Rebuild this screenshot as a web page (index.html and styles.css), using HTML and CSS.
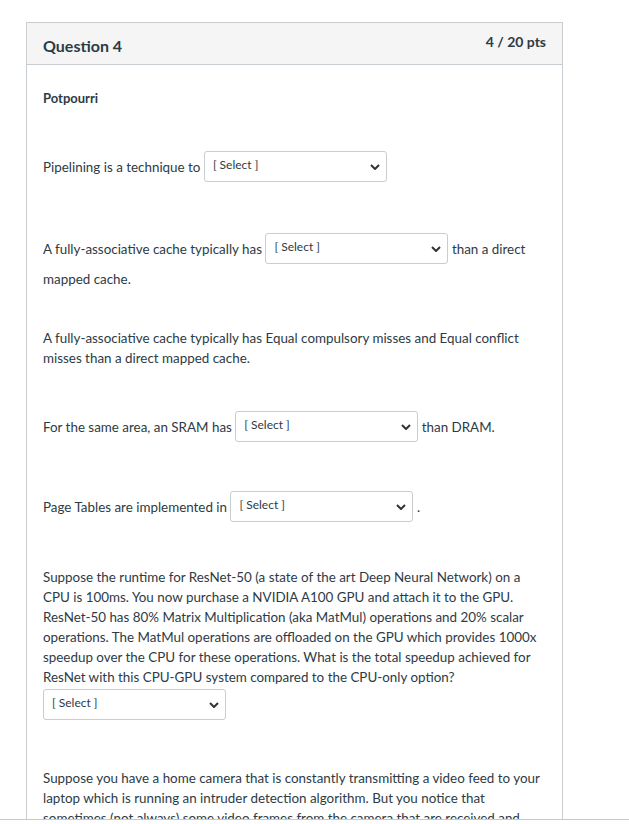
FILE: index.html
```html
<!DOCTYPE html>
<html>
<head>
<meta charset="utf-8">
<link rel="stylesheet" href="styles.css">
</head>
<body>
<div class="viewport">
  <div class="card">
    <div class="card-header">
      <h2 class="title">Question 4</h2>
      <span class="pts">4 / 20 pts</span>
    </div>
    <div class="card-body">
      <p class="heading">Potpourri</p>

      <p class="q q1">Pipelining is a technique to <span class="sel"><select><option>[ Select ]</option></select><svg class="chev" viewBox="0 0 10 6" width="10" height="6"><path d="M1 1l4 4 4-4" fill="none" stroke="#333" stroke-width="2"/></svg></span></p>

      <p class="q q2">A fully-associative cache typically has <span class="sel"><select><option>[ Select ]</option></select><svg class="chev" viewBox="0 0 10 6" width="10" height="6"><path d="M1 1l4 4 4-4" fill="none" stroke="#333" stroke-width="2"/></svg></span> than a direct mapped cache.</p>

      <p class="q q3">A fully-associative cache typically has Equal compulsory misses and Equal conflict misses than a direct mapped cache.</p>

      <p class="q q4">For the same area, an SRAM has <span class="sel"><select><option>[ Select ]</option></select><svg class="chev" viewBox="0 0 10 6" width="10" height="6"><path d="M1 1l4 4 4-4" fill="none" stroke="#333" stroke-width="2"/></svg></span> than DRAM.</p>

      <p class="q q5">Page Tables are implemented in <span class="sel"><select><option>[ Select ]</option></select><svg class="chev" viewBox="0 0 10 6" width="10" height="6"><path d="M1 1l4 4 4-4" fill="none" stroke="#333" stroke-width="2"/></svg></span> .</p>

      <p class="q q6">Suppose the runtime for ResNet-50 (a state of the art Deep Neural Network) on a CPU is 100ms. You now purchase a NVIDIA A100 GPU and attach it to the GPU. ResNet-50 has 80% Matrix Multiplication (aka MatMul) operations and 20% scalar operations. The MatMul operations are offloaded on the GPU which provides 1000x speedup over the CPU for these operations. What is the total speedup achieved for ResNet with this CPU-GPU system compared to the CPU-only option?</p>
      <div class="sel block"><select><option>[ Select ]</option></select><svg class="chev" viewBox="0 0 10 6" width="10" height="6"><path d="M1 1l4 4 4-4" fill="none" stroke="#333" stroke-width="2"/></svg></div>

      <p class="q q7">Suppose you have a home camera that is constantly transmitting a video feed to your laptop which is running an intruder detection algorithm. But you notice that sometimes (not always) some video frames from the camera that are received and processed by the laptop are corrupted.</p>
    </div>
  </div>
</div>
</body>
</html>
```

FILE: styles.css
```css
* { box-sizing: border-box; }
html, body { margin: 0; padding: 0; background: #fff; }
body {
  font-family: Lato, "Open Sans", sans-serif;
  color: #2d3b45;
  font-size: 13.4px;
}
.viewport {
  height: 820px;
  overflow: hidden;
  border-bottom: 1px solid #c8c8c8;
}
.card {
  margin: 22px 0 0 26px;
  width: 537px;
  border: 1px solid #c7cdd1;
  border-bottom: none;
  min-height: 900px;
}
.card-header {
  height: 42px;
  background: #f5f5f5;
  border-bottom: 1px solid #c7cdd1;
  display: flex;
  justify-content: space-between;
  align-items: flex-start;
  padding: 0 16px 0 16px;
}
.title {
  margin: 13px 0 0 0;
  font-size: 16px;
  font-weight: 700;
  line-height: 20px;
  color: #2d3b45;
}
.pts {
  margin-top: 9px;
  font-size: 14px;
  font-weight: 700;
  line-height: 20px;
  color: #2d3b45;
}
.card-body {
  padding: 0 16px;
}
p { margin: 0; line-height: 20px; }
.heading {
  margin-top: 23px;
  font-weight: 700;
  font-size: 13px;
}
.sel {
  position: relative;
  display: inline-block;
  width: 183px;
  height: 31px;
  vertical-align: middle;
  margin: 0 0 4px 0;
}
.sel select {
  appearance: none;
  -webkit-appearance: none;
  width: 100%;
  height: 100%;
  border: 1px solid #c7cdd1;
  border-radius: 3px;
  background: #fff;
  font-family: Lato, sans-serif;
  font-size: 12px;
  color: #2d3b45;
  padding: 0 0 5px 8px;
  margin: 0;
}
.sel .chev {
  position: absolute;
  right: 7px;
  top: 13px;
}
.sel.block { display: block; margin: 2px 0 0 0; }
.q1 { margin-top: 43px; }
.q2 { margin-top: 47px; line-height: 22px; }
.q3 { margin-top: 38px; }
.q4 { margin-top: 43px; }
.q5 { margin-top: 45px; }
.q6 { margin-top: 41px; }
.q7 { margin-top: 48px; }
```
